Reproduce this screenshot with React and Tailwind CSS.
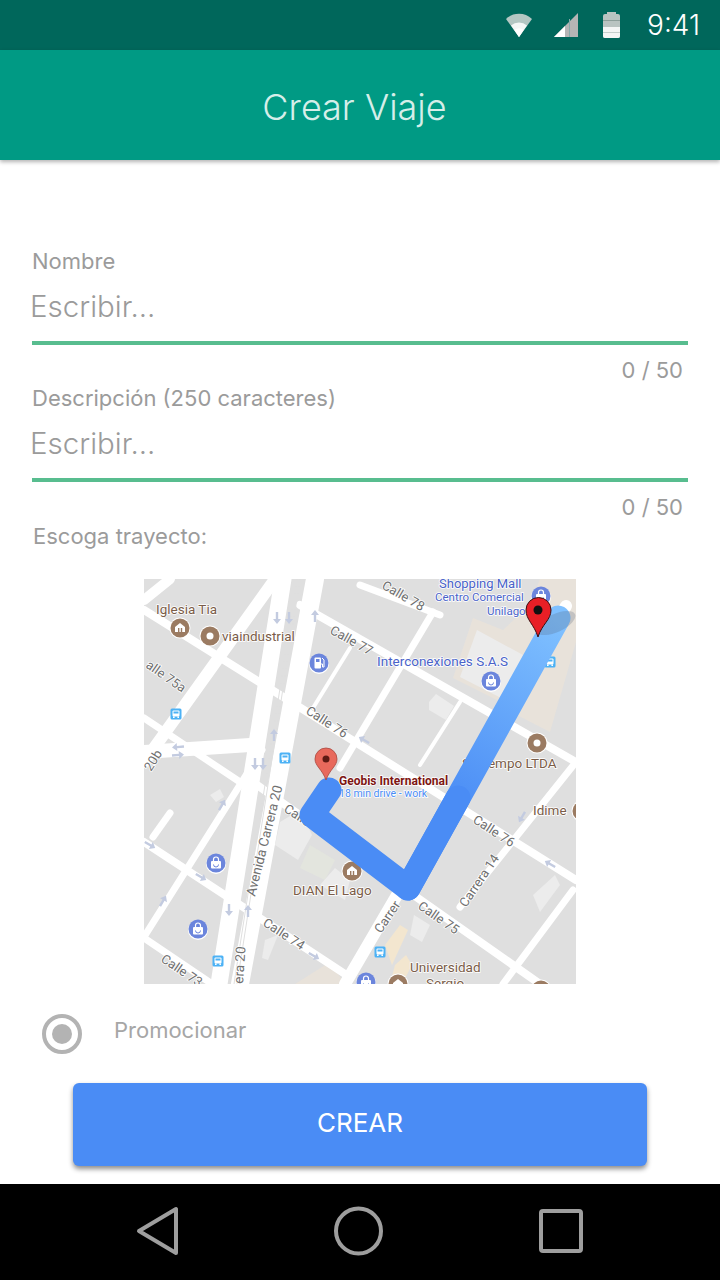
const UI_FONT = 'Inter, Roboto, sans-serif';

const ROADS = [
  // [x1, y1, x2, y2, width]
  [144, 600, 170, 579, 10],
  [273, 582, 144, 762, 12],
  [144, 610, 576, 880, 8],
  [300, 605, 576, 762, 8],
  [283, 579, 219, 984, 17],
  [315, 579, 240, 984, 18],
  [144, 842, 345, 974, 8],
  [144, 938, 212, 984, 7],
  [144, 937, 262, 750, 7],
  [144, 752, 250, 745, 14],
  [144, 718, 240, 782, 7],
  [250, 780, 540, 984, 8],
  [566, 606, 345, 984, 12],
  [576, 762, 460, 907, 7],
  [573, 890, 503, 984, 7],
  [433, 612, 340, 768, 7],
  [360, 585, 440, 615, 7],
  [460, 702, 420, 765, 4],
  [360, 745, 403, 772, 6],
  [350, 648, 313, 708, 4],
];

const LABELS = [
  // [text, x, y, angle, size, color]
  ['Calle 78', 381, 588, 30, 13, '#707070'],
  ['Calle 77', 329, 633, 29, 13, '#707070'],
  ['Calle 76', 305, 713, 33, 13, '#707070'],
  ['Calle 76', 472, 822, 33, 13, '#707070'],
  ['Calle 75', 417, 908, 35, 13, '#707070'],
  ['Calle 74', 262, 925, 33, 13, '#707070'],
  ['Calle 73', 160, 961, 34, 13, '#707070'],
  ['alle 75a', 145, 667, 35, 13, '#707070'],
  ['Calle', 283, 811, 33, 13, '#707070'],
  ['Avenida Carrera 20', 255, 897, -76, 13.5, '#707070'],
  ['era 20', 243, 984, -86, 13.5, '#707070'],
  ['Carrera 14', 466, 908, -56, 13, '#707070'],
  ['Carrer', 381, 934, -56, 13, '#707070'],
  ['20b', 151, 772, -58, 13, '#707070'],
  ['Iglesia Tia', 156, 614, 0, 13.5, '#7a5c48'],
  ['viaindustrial', 222, 641, 0, 13.5, '#7a5c48'],
  ['DIAN El Lago', 293, 895, 0, 13.5, '#7a5c48'],
  ['Sistiempo LTDA', 462, 768, 0, 13.5, '#7a5c48'],
  ['Idime', 533, 815, 0, 13.5, '#7a5c48'],
  ['Universidad', 410, 972, 0, 13.5, '#7a5c48'],
  ['Sergio', 426, 988, 0, 13.5, '#7a5c48'],
  ['Shopping Mall', 439, 588, 0, 13, '#4a63c9'],
  ['Centro Comercial', 435, 601, 0, 11.5, '#4a63c9'],
  ['Unilago', 487, 615, 0, 11.5, '#4a63c9'],
  ['Interconexiones S.A.S', 377, 666, 0, 13.5, '#4a63c9'],
];

function Shop({ x, y }) {
  return (
    <g>
      <circle cx={x} cy={y + 1} r="10" fill="#fff" />
      <circle cx={x} cy={y} r="9.5" fill="#6b85dc" />
      <rect x={x - 5} y={y - 2} width="10" height="7.5" rx="1" fill="#fff" />
      <path d={`M${x - 2.5} ${y - 2}v-1.5a2.5 2.5 0 0 1 5 0V${y - 2}`} fill="none" stroke="#fff" strokeWidth="1.2" />
      <path d={`M${x - 2.5} ${y + 1.5}a2.5 2.5 0 0 0 5 0`} fill="none" stroke="#6b85dc" strokeWidth="1" />
    </g>
  );
}

function Gas({ x, y }) {
  return (
    <g>
      <circle cx={x} cy={y + 1} r="10" fill="#fff" />
      <circle cx={x} cy={y} r="9.5" fill="#6b85dc" />
      <rect x={x - 4.5} y={y - 5.5} width="6.5" height="11" rx="1" fill="#fff" />
      <rect x={x - 3} y={y - 4} width="3.5" height="3" fill="#6b85dc" />
      <path d={`M${x + 2} ${y + 1}h1.5v3h1.5V${y - 3}l-2 -2`} fill="none" stroke="#fff" strokeWidth="1" />
    </g>
  );
}

function Ring({ x, y }) {
  return (
    <g>
      <circle cx={x} cy={y} r="10.5" fill="#fff" />
      <circle cx={x} cy={y} r="9.5" fill="#9b7b62" />
      <circle cx={x} cy={y} r="3.5" fill="#fff" />
    </g>
  );
}

function Civic({ x, y }) {
  return (
    <g>
      <circle cx={x} cy={y} r="10.5" fill="#fff" />
      <circle cx={x} cy={y} r="9.5" fill="#9b7b62" />
      <path d={`M${x - 5} ${y - 1}L${x} ${y - 5}L${x + 5} ${y - 1}V${y + 4}H${x - 5}Z`} fill="#fff" />
      <rect x={x - 2} y={y} width="1.4" height="4" fill="#9b7b62" />
      <rect x={x + 0.8} y={y} width="1.4" height="4" fill="#9b7b62" />
    </g>
  );
}

function Bus({ x, y }) {
  return (
    <g>
      <rect x={x - 5.5} y={y - 5.5} width="11" height="11" rx="1.5" fill="#4db2f5" />
      <rect x={x - 3.5} y={y - 3.5} width="7" height="6" rx="1" fill="#fff" />
      <rect x={x - 2.5} y={y - 2.5} width="5" height="2" fill="#4db2f5" />
      <rect x={x - 3} y={y + 2.5} width="1.6" height="1.5" fill="#fff" />
      <rect x={x + 1.4} y={y + 2.5} width="1.6" height="1.5" fill="#fff" />
    </g>
  );
}

function Arrow({ x, y, angle }) {
  return (
    <path
      d="M0 -6L4 -1H1.2V6H-1.2V-1H-4Z"
      fill="#c3cbe0"
      transform={`translate(${x} ${y}) rotate(${angle})`}
    />
  );
}

function MapPicture() {
  return (
    <svg viewBox="144 579 432 405" className="block w-[432px] h-[405px]" style={{ fontFamily: 'Roboto, sans-serif' }}>
      <defs>
        <linearGradient id="route" gradientUnits="userSpaceOnUse" x1="555" y1="620" x2="440" y2="800">
          <stop offset="0" stopColor="#7fc0ff" />
          <stop offset="1" stopColor="#4a8cf5" />
        </linearGradient>
      </defs>
      <rect x="144" y="579" width="432" height="405" fill="#dfdfdf" />

      <path d="M473 618L503 630L530 605L540 579H576V642L550 732L517 715L513 708L453 678Z" fill="#e8e2da" />
      <path d="M477 630L523 655L505 700L460 677Z" fill="#ececec" />
      <path d="M295 984L330 962L345 984Z" fill="#e8e2da" />

      <g stroke="#fff" strokeLinecap="round" fill="none">
        {ROADS.map(([x1, y1, x2, y2, w], i) => (
          <line key={i} x1={x1} y1={y1} x2={x2} y2={y2} strokeWidth={w} />
        ))}
        <line x1="153" y1="837" x2="170" y2="813" strokeWidth="7" />
      </g>
      <g stroke="#dfdfdf" strokeWidth="1" fill="none">
        <line x1="297" y1="579" x2="234" y2="984" />
        <line x1="300" y1="579" x2="237" y2="984" />
      </g>

      {/* buildings */}
      <path d="M429 702L436 694L454 706L446 720L429 710Z" fill="#ececec" />
      <path d="M280 822L300 810L312 835L298 860L275 845Z" fill="#ececec" />
      <path d="M310 845L335 860L325 880L300 868Z" fill="#e3e5de" />
      <path d="M335 868L350 880L345 900L320 885Z" fill="#ececec" />
      <path d="M533 895L555 875L560 885L540 912Z" fill="#ececec" />
      <path d="M385 945L400 925L408 930L392 965Z" fill="#f3e6cf" />
      <path d="M395 965L406 955L412 965L402 984H390Z" fill="#f3e6cf" />
      <path d="M414 915L430 925L422 942L410 935Z" fill="#ececec" />
      <path d="M265 940L278 935L268 960L262 958Z" fill="#ececec" />
      <path d="M210 795L220 789L224 797L216 802Z" fill="#ececec" />

      {LABELS.map(([text, x, y, angle, size, color]) => (
        <text
          key={text + x}
          x={x}
          y={y}
          fontSize={size}
          fill={color}
          stroke="#fff"
          strokeWidth="1.5"
          paintOrder="stroke"
          transform={angle ? `rotate(${angle} ${x} ${y})` : undefined}
        >
          {text}
        </text>
      ))}

      <Arrow x={277} y={618} angle={180} />
      <Arrow x={289} y={618} angle={180} />
      <Arrow x={315} y={616} angle={0} />
      <Arrow x={274} y={735} angle={0} />
      <Arrow x={178} y={747} angle={-95} />
      <Arrow x={178} y={755} angle={85} />
      <Arrow x={255} y={764} angle={180} />
      <Arrow x={263} y={764} angle={180} />
      <Arrow x={222} y={805} angle={30} />
      <Arrow x={150} y={845} angle={120} />
      <Arrow x={201} y={877} angle={120} />
      <Arrow x={229} y={910} angle={180} />
      <Arrow x={248} y={911} angle={0} />
      <Arrow x={163} y={901} angle={30} />
      <Arrow x={314} y={956} angle={120} />
      <Arrow x={522} y={817} angle={210} />
      <Arrow x={550} y={864} angle={300} />
      <Arrow x={364} y={740} angle={300} />

      <Civic x={180} y={628} />
      <Ring x={210} y={636} />
      <Gas x={319} y={663} />
      <Shop x={491} y={681} />
      <Shop x={541} y={596} />
      <Shop x={216} y={863} />
      <Shop x={198} y={929} />
      <Shop x={366} y={982} />
      <Ring x={537} y={743} />
      <Ring x={582} y={811} />
      <Civic x={352} y={871} />
      <Civic x={398} y={984} />
      <Ring x={541} y={990} />
      <Bus x={176} y={714} />
      <Bus x={285} y={758} />
      <Bus x={218} y={961} />
      <Bus x={380} y={952} />
      <Bus x={550} y={662} />

      <text x="339" y="797" fontSize="10.5" fill="#4a8cf5" stroke="#fff" strokeWidth="1.5" paintOrder="stroke">18 min drive - work</text>

      {/* route */}
      <polyline points="558,618 408,888" fill="none" stroke="url(#route)" strokeWidth="25" strokeLinecap="round" />
      <polyline points="329,790 312,815 408,888 458,798" fill="none" stroke="#4a8cf5" strokeWidth="25" strokeLinecap="round" strokeLinejoin="round" />
      <ellipse cx="556" cy="623" rx="21" ry="9" fill="#55627a" opacity="0.25" transform="rotate(-25 556 623)" />

      {/* pins */}
      <path d="M326 780C322 769 315 766 315 759A11 11 0 0 1 337 759C337 766 330 769 326 780Z" fill="#e8695c" stroke="#a8483f" strokeWidth="0.8" />
      <circle cx="326" cy="759" r="3.5" fill="#5e1a14" />
      <path d="M538 637C534 624 526 620 526 610A12.5 12.5 0 0 1 551 610C551 620 542 624 538 637Z" fill="#e81f26" stroke="#3a1010" strokeWidth="1" />
      <circle cx="538" cy="610" r="4.5" fill="#111" />

      <text x="339" y="785" fontSize="12" fontWeight="700" fill="#7d1512" stroke="#fff" strokeWidth="1.5" paintOrder="stroke">Geobis International</text>
    </svg>
  );
}

function StatusIcons() {
  return (
    <div className="flex items-center">
      <svg width="28" height="26" viewBox="0 0 28 26" className="mr-[21px]">
        <path d="M1 7A19 19 0 0 1 27 7L14 25Z" fill="#b4c7c3" />
        <path d="M6 13.5A12 12 0 0 1 22 13.5L14 25Z" fill="#fff" opacity="0.85" />
        <path d="M9.5 18A7 7 0 0 1 18.5 18L14 25Z" fill="#fff" />
      </svg>
      <svg width="24" height="24" viewBox="0 0 24 24" className="mr-[25px]">
        <path d="M0 24L24 0V24Z" fill="#b5b5b5" />
        <path d="M0 24L11 13V24Z" fill="#fff" />
        <rect x="15" y="6" width="1" height="18" fill="#8aa" />
      </svg>
      <svg width="17" height="26" viewBox="0 0 17 26" className="mr-[27px]">
        <rect x="4" y="0" width="9" height="3" fill="#b9c4c1" />
        <rect x="0" y="2" width="17" height="24" rx="2" fill="#b9c4c1" />
        <path d="M0 15H17V24a2 2 0 0 1 -2 2H2a2 2 0 0 1 -2 -2Z" fill="#f4f6f5" />
        <rect x="0" y="8" width="17" height="1" fill="#8d9f9a" />
        <rect x="0" y="20" width="17" height="1" fill="#c5d0cd" />
      </svg>
      <span className="text-[28px] leading-none text-white font-light">9:41</span>
    </div>
  );
}

function Field({ label }) {
  return (
    <div>
      <div className="text-[22px] leading-[28px] text-[#9b9b9b] pl-[32px]">{label}</div>
      <div className="text-[29.5px] leading-[38px] text-[#9b9b9b] pl-[30px] mt-[12px] font-light">Escribir...</div>
      <div className="mx-[32px] h-[4px] bg-[#58bd8f] mt-[16px]" />
      <div className="text-[22px] leading-[28px] text-[#9b9b9b] text-right pr-[37px] mt-[11px]">0 / 50</div>
    </div>
  );
}

export default function App() {
  return (
    <div className="w-[720px] h-[1280px] flex flex-col bg-white overflow-hidden" style={{ fontFamily: UI_FONT }}>
      <div className="h-[50px] shrink-0 bg-[#00675b] flex items-center justify-end pr-[20px]">
        <StatusIcons />
      </div>
      <div className="h-[110px] shrink-0 bg-[#009a84] flex items-center justify-center shadow-[0_2px_4px_rgba(0,0,0,0.3)] z-10">
        <span className="text-[36px] text-[#d5eee9] font-light pr-[11px] mt-[3px]">Crear Viaje</span>
      </div>

      <div className="flex-1 flex flex-col pt-[87px]">
        <Field label="Nombre" />
        <Field label="Descripción (250 caracteres)" />
        <div className="text-[22px] leading-[28px] text-[#9b9b9b] pl-[33px] mt-[1px]">Escoga trayecto:</div>
        <div className="flex justify-center mt-[29px]">
          <MapPicture />
        </div>
        <div className="flex items-center pl-[42px] mt-[30px]">
          <div className="w-[40px] h-[40px] rounded-full border-[4px] border-[#b3b3b3] flex items-center justify-center">
            <div className="w-[20px] h-[20px] rounded-full bg-[#b3b3b3]" />
          </div>
          <span className="text-[22px] text-[#a6a6a6] ml-[32px] -mt-[8px]">Promocionar</span>
        </div>
        <button className="mx-[73px] mt-[29px] h-[83px] pb-[4px] rounded-[6px] bg-[#4a8cf5] text-white text-[26px] flex items-center justify-center shadow-[0_3px_5px_rgba(0,0,0,0.45)]">
          CREAR
        </button>
      </div>

      <div className="h-[96px] shrink-0 bg-black flex items-center">
        <svg width="720" height="96" viewBox="0 0 720 96" className="block">
          <g fill="none" stroke="#9e9e9e" strokeWidth="4" strokeLinejoin="round">
            <path d="M176 25V69L139 47Z" />
            <circle cx="358.5" cy="47" r="22.5" />
            <rect x="541" y="27" width="40" height="40" rx="2" />
          </g>
        </svg>
      </div>
    </div>
  );
}
